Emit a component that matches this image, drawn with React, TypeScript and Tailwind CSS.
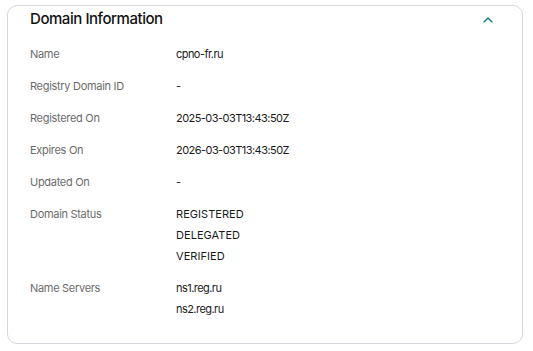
import { ChevronUp } from "lucide-react";

const rows: { label: string; values: string[] }[] = [
  { label: "Name", values: ["cpno-fr.ru"] },
  { label: "Registry Domain ID", values: ["-"] },
  { label: "Registered On", values: ["2025-03-03T13:43:50Z"] },
  { label: "Expires On", values: ["2026-03-03T13:43:50Z"] },
  { label: "Updated On", values: ["-"] },
  { label: "Domain Status", values: ["REGISTERED", "DELEGATED", "VERIFIED"] },
  { label: "Name Servers", values: ["ns1.reg.ru", "ns2.reg.ru"] },
];

export default function App() {
  return (
    <div className="min-h-[351px] w-[533px] bg-white pl-[7px] pt-[5px] font-['Inter',sans-serif]">
      <div className="w-[516px] rounded-[10px] border border-[#d4d8dc] pb-[23px] pl-[22px] pr-[26px]">
        {/* Header */}
        <div className="flex h-[27px] items-center justify-between">
          <h2 className="text-[15px] font-medium tracking-[-0.45px] text-[#111111]">
            Domain Information
          </h2>
          <ChevronUp className="h-4 w-4 text-[#0b7f86]" strokeWidth={2} />
        </div>

        {/* Rows */}
        <div className="mt-[11px] flex flex-col gap-[11px]">
          {rows.map((row) => (
            <div key={row.label} className="flex text-[11px] leading-[21px]">
              <div className="w-[146px] shrink-0 tracking-[-0.3px] text-[#6b6b6b]">
                {row.label}
              </div>
              <div className="flex flex-col text-[#1a1a1a]">
                {row.values.map((v) =>
                  v === v.toUpperCase() && /[A-Z]/.test(v) && !/\d/.test(v) ? (
                    <span key={v} className="tracking-[0.05px]">
                      {v}
                    </span>
                  ) : (
                    <span key={v} className="tracking-[-0.55px]">
                      {v}
                    </span>
                  )
                )}
              </div>
            </div>
          ))}
        </div>
      </div>
    </div>
  );
}
